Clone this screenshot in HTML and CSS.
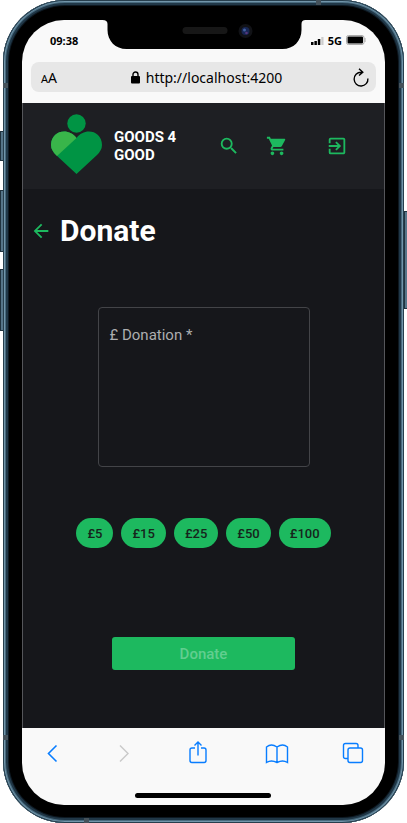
FILE: index.html
```html
<!DOCTYPE html>
<html lang="en">
<head>
<meta charset="utf-8">
<meta name="viewport" content="width=device-width, initial-scale=1">
<title>Goods 4 Good – Donate</title>
<link rel="stylesheet" href="styles.css">
</head>
<body>
<div class="phone">
  <span class="key key-mute"></span>
  <span class="key key-up"></span>
  <span class="key key-down"></span>
  <span class="key key-power"></span>
  <span class="seam seam-top"></span>
  <span class="seam seam-bottom"></span>
  <span class="seam seam-left"></span>
  <span class="seam seam-left seam-low"></span>
  <span class="seam seam-right"></span>
  <span class="seam seam-right seam-low"></span>
  <div class="screen">
    <svg class="notch" width="203" height="29" viewBox="0 0 203 29" aria-hidden="true">
      <path d="M0 0H203Q199 0 199 4V10C199 21 191 29 180 29H24C13 29 5 21 5 10V4Q5 0 0 0Z" fill="#000"/>
      <rect x="80" y="7" width="45" height="7" rx="3.500" fill="#171717"/>
      <circle cx="143" cy="11" r="7" fill="#111216"/>
      <circle cx="143" cy="11" r="4" fill="#172653"/>
      <circle cx="142" cy="10" r="1.500" fill="#4260a0"/>
      <circle cx="144" cy="13" r="1.300" fill="#55377c"/>
    </svg>
    <div class="browser-top">
      <div class="status">
        <span class="clock">09:38</span>
        <span class="signals">
          <svg width="13" height="9" viewBox="0 0 13 9" aria-hidden="true"><path d="M0 6h2.500v3H0zM3.400 5h2.500v4H3.400zM6.800 3h2.500v6H6.800z" fill="#000"/><path d="M10.300 1h2.200v8h-2.200z" fill="#ccc"/></svg>
          <span>5G</span>
          <svg width="20" height="10" viewBox="0 0 20 10" aria-hidden="true"><rect x=".5" y=".5" width="17.500" height="9" rx="2" fill="#fff" stroke="#aaa"/><rect x="1.500" y="1.500" width="15.500" height="7" rx="1" fill="#000"/><path d="M19 3v4" stroke="#aaa"/></svg>
        </span>
      </div>
      <div class="address">
        <button class="text-size" type="button" aria-label="Text size"><small>A</small>A</button>
        <span class="url">
          <svg width="9" height="13" viewBox="0 0 9 13" aria-hidden="true"><rect y="5" width="9" height="7.500" rx="1" fill="#000"/><path d="M2 6V3.500a2.500 2.500 0 0 1 5 0V6" fill="none" stroke="#000" stroke-width="1.400"/></svg>
          <span>http://localhost:4200</span>
        </span>
        <button class="reload" type="button" aria-label="Reload">
          <svg width="17" height="19" viewBox="0 0 17 19" fill="none" stroke="#000" stroke-width="1.400" aria-hidden="true"><path d="M10.500 4.200H9A6.900 6.900 0 1 0 15.900 10.500M7 .8l3.800 3.400-3.800 3.400"/></svg>
        </button>
      </div>
    </div>
    <div class="app">
      <header class="header">
        <a class="brand" href="#">
          <svg width="51" height="61" viewBox="0 0 51 61" aria-hidden="true">
            <circle cx="25.500" cy="9.500" r="9.200" fill="#009444"/>
            <path d="M25.500 60L5 41Q0 36 0 31C0 16 18 13 25.500 24C33 13 51 16 51 31Q51 36 46 41Z" fill="#009444"/>
            <path d="M6 42L5 41Q0 36 0 31C0 16 18 13 25.500 24Z" fill="#39b54a"/>
          </svg>
          <span class="brand-name">GOODS 4 GOOD</span>
        </a>
        <nav class="nav">
          <a href="#" aria-label="Search"><svg width="22" height="22" viewBox="0 0 24 24"><path d="M15.500 14h-.79l-.28-.27A6.471 6.471 0 0 0 16 9.500 6.500 6.500 0 1 0 9.500 16c1.610 0 3.090-.59 4.230-1.570l.27.28v.79l5 4.990L20.490 19l-4.990-5zm-6 0C7.010 14 5 11.990 5 9.500S7.010 5 9.500 5 14 7.010 14 9.500 11.990 14 9.500 14z"/></svg></a>
          <a href="#" aria-label="Cart"><svg width="22" height="22" viewBox="0 0 24 24"><path d="M7 18c-1.100 0-1.990.9-1.990 2S5.900 22 7 22s2-.9 2-2-.9-2-2-2zM1 2v2h2l3.600 7.590-1.350 2.450c-.16.28-.25.61-.25.960 0 1.100.9 2 2 2h12v-2H7.420c-.14 0-.25-.11-.25-.25l.03-.12.900-1.630h7.450c.75 0 1.410-.41 1.750-1.030l3.580-6.490c.08-.14.12-.31.120-.48 0-.55-.45-1-1-1H5.210l-.94-2H1zm16 16c-1.100 0-1.990.9-1.990 2s.89 2 1.990 2 2-.9 2-2-.9-2-2-2z"/></svg></a>
          <a class="sign-in" href="#" aria-label="Sign in"><svg width="22" height="22" viewBox="0 0 24 24"><path d="M10.090 15.590L11.500 17l5-5-5-5-1.410 1.410L12.670 11H3v2h9.670l-2.580 2.590zM19 3H5a2 2 0 0 0-2 2v4h2V5h14v14H5v-4H3v4a2 2 0 0 0 2 2h14c1.100 0 2-.9 2-2V5c0-1.100-.9-2-2-2z"/></svg></a>
        </nav>
      </header>
      <main class="main">
        <div class="title">
          <a href="#" aria-label="Back"><svg width="22" height="22" viewBox="0 0 24 24"><path d="M20 11H7.830l5.590-5.590L12 4l-8 8 8 8 1.410-1.410L7.830 13H20v-2z"/></svg></a>
          <h1>Donate</h1>
        </div>
        <form class="form">
          <div class="field">
            <label for="amount">£ Donation *</label>
            <textarea id="amount"></textarea>
          </div>
          <div class="chips">
            <button type="button">£5</button>
            <button type="button">£15</button>
            <button type="button">£25</button>
            <button type="button">£50</button>
            <button type="button">£100</button>
          </div>
          <button class="submit" type="submit" disabled>Donate</button>
        </form>
      </main>
    </div>
    <div class="toolbar">
      <div class="tools">
        <button type="button" aria-label="Back"><svg width="22" height="24" viewBox="0 0 22 24"><path d="M14.500 4.500L6.500 12.500l8 8" stroke-width="1.600"/></svg></button>
        <button class="off" type="button" aria-label="Forward" disabled><svg width="22" height="24" viewBox="0 0 22 24"><path d="M7 4.500l8 8-8 8"/></svg></button>
        <button type="button" aria-label="Share"><svg width="22" height="24" viewBox="0 0 22 24"><path d="M8 7H5Q3 7 3 9v10.500q0 2 2 2h12q2 0 2-2V9q0-2-2-2h-3M11 14.500V1M7.500 4.500L11 1l3.500 3.500"/></svg></button>
        <button type="button" aria-label="Bookmarks"><svg width="24" height="24" viewBox="0 0 24 24"><path d="M12 21.500V6Q9 4 6.500 4T1.500 6v15.500q2.500-1.500 5-1.500T12 21.500q3-1.500 5.500-1.500t5 1.500V6Q20 4 17.500 4T12 6"/></svg></button>
        <button type="button" aria-label="Tabs"><svg width="22" height="24" viewBox="0 0 22 24"><rect x="6" y="7" width="14.500" height="14.500" rx="2"/><path d="M6 17.500H3.500q-2 0-2-2V4.500q0-2 2-2h10.500q2 0 2 2V7"/></svg></button>
      </div>
      <div class="home-bar"></div>
    </div>
  </div>
</div>
</body>
</html>
```
FILE: styles.css
```css
* { box-sizing: border-box; }

body {
  margin: 0;
  min-height: 100vh;
  display: flex;
  background: #fff;
  font-family: Roboto, sans-serif;
}

button {
  border: 0;
  padding: 0;
  background: none;
  font: inherit;
  color: inherit;
}

svg { display: block; }

.phone {
  position: relative;
  flex: 1;
  display: flex;
  margin: 0 3px;
  padding: 20px 19px 18px;
  border-radius: 62px;
  background: #000;
  box-shadow:
    inset 0 0 0 1px #263e4d,
    inset 0 0 0 2px #7195aa,
    inset 0 0 0 3px #486a7e,
    inset 0 0 0 5px #203747,
    inset 0 0 0 6px #0d1821;
}

.key {
  position: absolute;
  left: -3px;
  width: 3px;
  height: 62px;
  border: 1px solid #20333f;
  border-right: 0;
  background: #567589;
}

.key-mute { top: 131px; height: 30px; }
.key-up { top: 190px; }
.key-down { top: 269px; }
.key-power {
  top: 211px;
  right: -3px;
  left: auto;
  height: 98px;
}

.seam {
  position: absolute;
  width: 5px;
  height: 5px;
  background: #45525b;
}

.seam-top { top: 0; right: 83px; }
.seam-bottom { bottom: 0; left: 81px; }
.seam-left { top: 83px; left: 0; }
.seam-right { top: 83px; right: 0; }
.seam-low { top: auto; bottom: 83px; }

.screen {
  position: relative;
  flex: 1;
  min-width: 0;
  display: flex;
  flex-direction: column;
  overflow: hidden;
  border-radius: 42px;
  background: #f9f9f9;
}

.notch {
  position: absolute;
  top: 0;
  left: 50%;
  transform: translateX(-50%);
}

.browser-top {
  display: flex;
  flex-direction: column;
  gap: 12px;
  padding: 10px 9px 11px;
  color: #000;
  font-family: "Noto Sans", sans-serif;
}

.status {
  display: flex;
  align-items: center;
  justify-content: space-between;
  height: 20px;
  padding: 0 10px 0 19px;
  font-size: 11px;
  font-weight: 700;
}

.signals {
  display: flex;
  align-items: center;
  gap: 4px;
}

.address {
  display: flex;
  align-items: center;
  justify-content: space-between;
  height: 30px;
  padding: 0 7px 0 10px;
  border-radius: 8px;
  background: #e7e7e7;
  font-size: 14px;
}

.text-size small { font-size: 11px; }

.url {
  display: flex;
  align-items: center;
  gap: 6px;
  padding-left: 4px;
}

.app {
  flex: 1;
  display: flex;
  flex-direction: column;
  border: 1px solid #55565a;
  border-width: 0 1px;
  background: #16171b;
  color: #fff;
}

.app a {
  color: inherit;
  text-decoration: none;
}

.header {
  display: flex;
  align-items: center;
  justify-content: space-between;
  height: 86px;
  padding: 0 36px 0 28px;
  background: #1e1f23;
}

.brand {
  display: flex;
  align-items: center;
  gap: 12px;
}

.brand svg { margin-bottom: 4px; }

.brand-name {
  width: 72px;
  font-size: 15px;
  font-weight: 700;
  line-height: 18px;
}

.nav {
  display: flex;
  gap: 26px;
  fill: #1db95f;
}

.sign-in { margin-left: 12px; }

.main {
  padding: 22px 0 56px;
}

.title {
  display: flex;
  align-items: center;
  gap: 8px;
  padding-left: 7px;
  fill: #1db95f;
}

.title h1 {
  margin: 0;
  font-size: 30px;
  font-weight: 700;
  line-height: 40px;
}

.form {
  display: flex;
  flex-direction: column;
  align-items: center;
  margin-top: 56px;
}

.field {
  position: relative;
  width: 212px;
}

.field label {
  position: absolute;
  top: 18px;
  left: 12px;
  color: #adaeaf;
  font-size: 15px;
  line-height: 20px;
}

.field textarea {
  display: block;
  width: 100%;
  height: 160px;
  padding: 40px 12px 12px;
  border: 1px solid #434448;
  border-radius: 4px;
  background: none;
  color: #fff;
  font: inherit;
  resize: none;
}

.chips {
  display: flex;
  gap: 8px;
  margin-top: 51px;
}

.chips button {
  height: 30px;
  padding: 0 11px;
  border-radius: 15px;
  background: #1db95f;
  color: #16251c;
  font-size: 13px;
  font-weight: 500;
}

.submit {
  width: 183px;
  height: 33px;
  margin-top: 89px;
  border-radius: 3px;
  background: #1db95f;
  color: #61ce8f;
  font-size: 15px;
  font-weight: 500;
}

.toolbar {
  display: flex;
  flex-direction: column;
  align-items: center;
  justify-content: space-between;
  height: 77px;
  padding: 13px 21px 7px 20px;
}

.tools {
  display: grid;
  grid-template-columns: 71fr 74fr 77fr 77fr 22px;
  justify-items: start;
  width: 100%;
  fill: none;
  stroke: #087dff;
  stroke-width: 1.4;
}

.off { stroke: #c9c9c9; }

.home-bar {
  width: 136px;
  height: 5px;
  border-radius: 3px;
  background: #000;
}
```
